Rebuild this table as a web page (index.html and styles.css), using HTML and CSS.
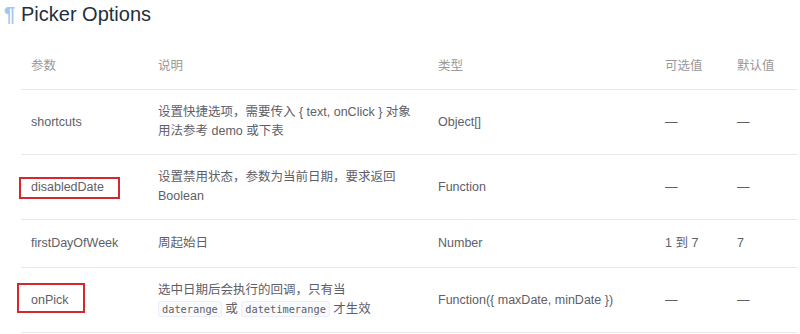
FILE: index.html
```html
<!DOCTYPE html>
<html lang="zh">
<head>
<meta charset="utf-8">
<title>Picker Options</title>
<link rel="stylesheet" href="styles.css">
</head>
<body>
<div class="doc">
  <h3 class="title"><a class="anchor">¶</a><span>Picker Options</span></h3>
  <table class="opts">
    <colgroup>
      <col class="c1"><col class="c2"><col class="c3"><col class="c4"><col class="c5">
    </colgroup>
    <thead>
      <tr><th>参数</th><th>说明</th><th>类型</th><th>可选值</th><th>默认值</th></tr>
    </thead>
    <tbody>
      <tr>
        <td>shortcuts</td>
        <td>设置快捷选项，需要传入 { text, onClick } 对象<br>用法参考 demo 或下表</td>
        <td>Object[]</td>
        <td>—</td>
        <td>—</td>
      </tr>
      <tr>
        <td><span class="mark mark-a">disabledDate</span></td>
        <td>设置禁用状态，参数为当前日期，要求返回<br>Boolean</td>
        <td>Function</td>
        <td>—</td>
        <td>—</td>
      </tr>
      <tr class="single">
        <td>firstDayOfWeek</td>
        <td>周起始日</td>
        <td>Number</td>
        <td>1 到 7</td>
        <td>7</td>
      </tr>
      <tr>
        <td><span class="mark mark-b">onPick</span></td>
        <td>选中日期后会执行的回调，只有当<br><code>daterange</code> 或 <code>datetimerange</code> 才生效</td>
        <td>Function({ maxDate, minDate })</td>
        <td>—</td>
        <td>—</td>
      </tr>
    </tbody>
  </table>
</div>
</body>
</html>
```

FILE: styles.css
```css
html, body {
  margin: 0;
  padding: 0;
  background: #fff;
}

body {
  font-family: "Liberation Sans", Arial, "Noto Sans CJK SC", sans-serif;
}

.doc {
  padding: 0 3px 0 21px;
}

.title {
  display: flex;
  align-items: baseline;
  margin: 0;
  font-size: 20px;
  line-height: 28px;
  font-weight: normal;
  color: #1f2f3d;
}

.anchor {
  width: 17px;
  margin-left: -17px;
  color: #a0c6f2;
  font-weight: bold;
  text-decoration: none;
}

.opts {
  margin-top: 16px;
  width: 776px;
  table-layout: fixed;
  border-collapse: collapse;
  font-size: 12.5px;
  line-height: 19px;
}

.c1 { width: 127px; }
.c2 { width: 280px; }
.c3 { width: 227px; }
.c4 { width: 72px; }
.c5 { width: 70px; }

.opts th,
.opts td {
  padding: 13px 0 13px 10px;
  text-align: left;
  vertical-align: middle;
  border-bottom: 1px solid #e6e8ee;
  white-space: nowrap;
}

.opts .single td {
  padding-top: 14px;
  padding-bottom: 14px;
}

.opts th {
  font-weight: normal;
  color: #999;
}

.opts td {
  color: #5e6068;
}

.opts code {
  font-family: "DejaVu Sans Mono", "Liberation Mono", monospace;
  font-size: 10.3px;
  padding: 1px 3px;
  background: #f9fafc;
  border: 1px solid #eaeefb;
  border-radius: 3px;
  color: #5e6068;
}

.mark {
  display: inline-block;
  position: relative;
}

.mark::after {
  content: "";
  position: absolute;
  box-sizing: border-box;
  border: 2px solid #d6262e;
  pointer-events: none;
}

.mark-a::after {
  top: -1px;
  bottom: -2px;
  left: -12px;
  right: -16px;
}

.mark-b::after {
  top: -8px;
  bottom: -3px;
  left: -14px;
  right: -16px;
}
```
